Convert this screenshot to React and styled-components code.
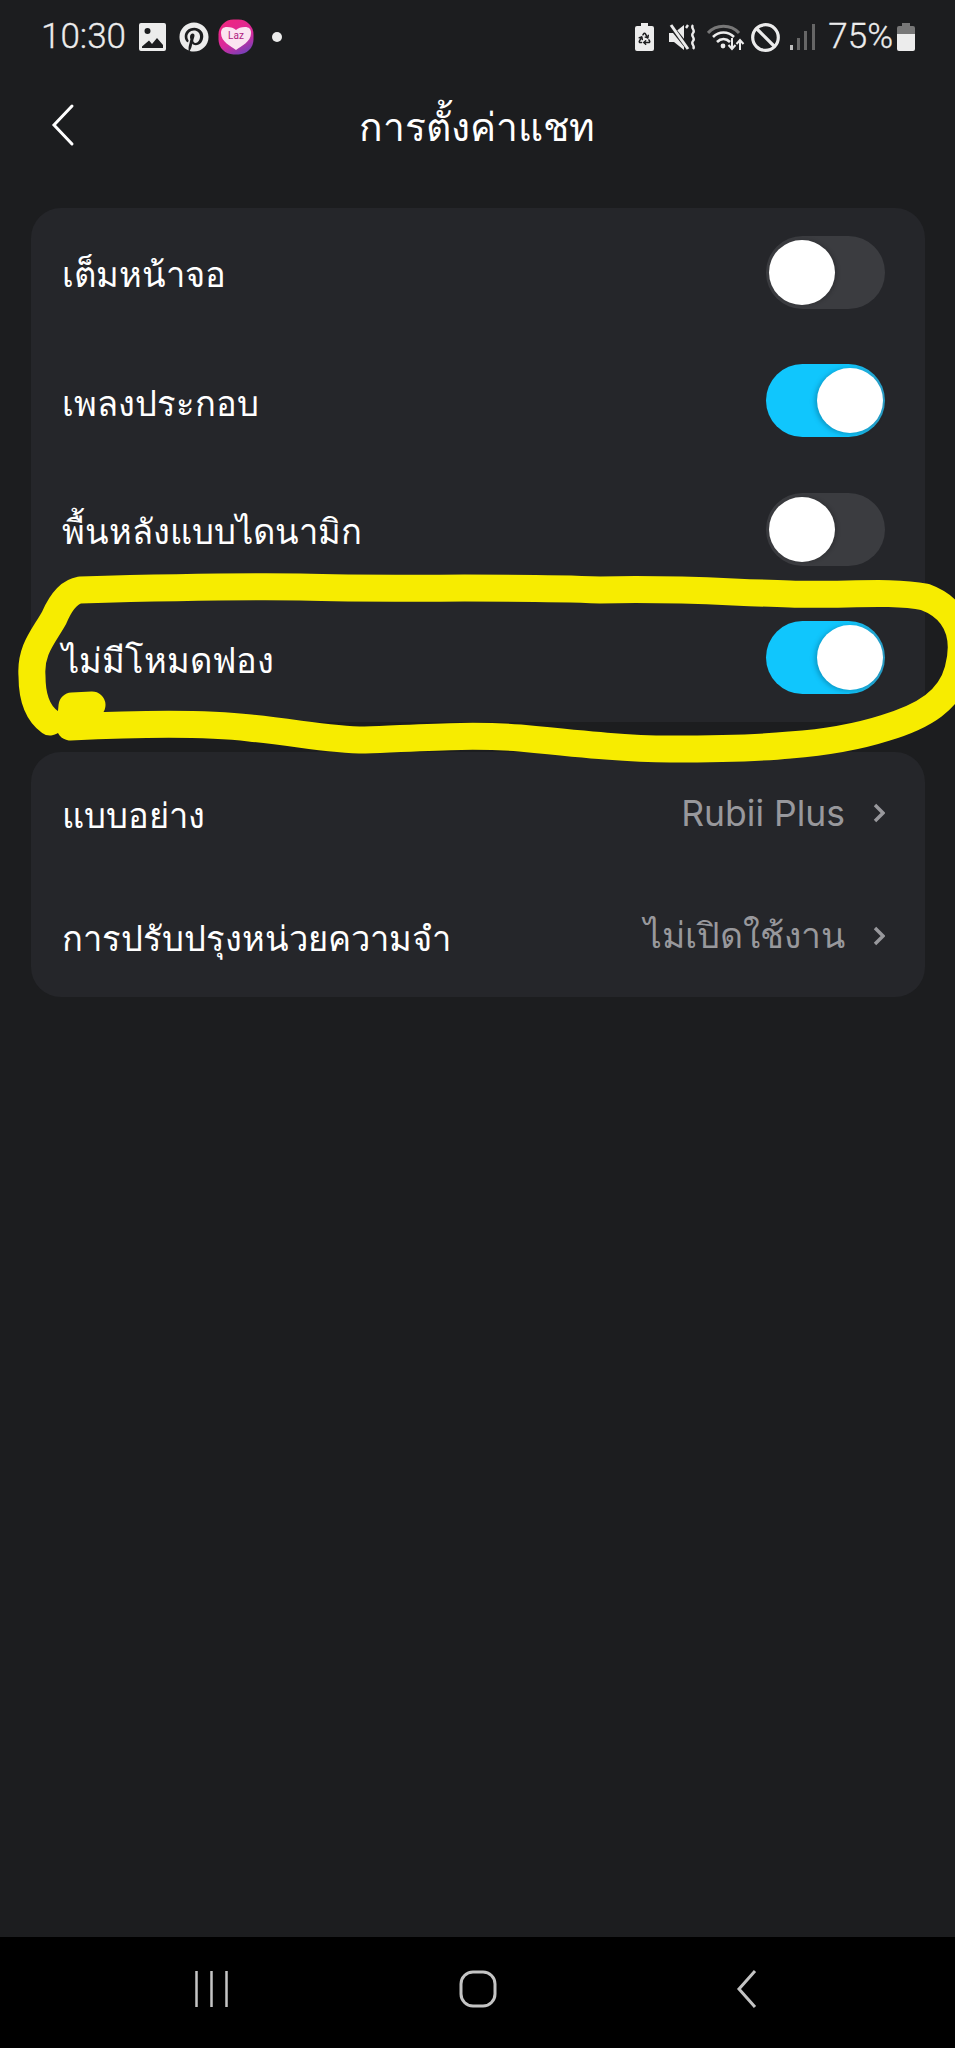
import React from "react";
import styled, { createGlobalStyle } from "styled-components";
import { FaPinterest } from "react-icons/fa";
import { Recycle } from "lucide-react";

const GlobalStyle = createGlobalStyle`
  html, body {
    margin: 0;
    padding: 0;
    background: #1c1d1f;
  }
  * {
    box-sizing: border-box;
  }
`;

const Page = styled.div`
  position: relative;
  width: 955px;
  height: 2048px;
  overflow: hidden;
  display: flex;
  flex-direction: column;
  background: #1c1d1f;
  font-family: "Noto Sans", "Liberation Sans", sans-serif;
  color: #fff;
`;

const StatusBar = styled.div`
  height: 72px;
  padding: 2px 40px 0 41px;
  display: flex;
  align-items: center;
  justify-content: space-between;
  color: #ececec;
`;

const StatusGroup = styled.div`
  display: flex;
  align-items: center;
`;

const StatusSlot = styled.span`
  display: flex;
  align-items: center;
  margin-left: ${(p) => p.$gap || 0}px;
`;

const StatusText = styled.span`
  font-family: Roboto, sans-serif;
  font-size: 35px;
  font-weight: 300;
  line-height: 36px;
  color: #ececec;
  -webkit-text-stroke: 0.3px #ececec;
`;

const Header = styled.header`
  height: 136px;
  padding: 0 0 26px 53px;
  position: relative;
  display: flex;
  align-items: center;
  justify-content: center;
`;

const BackButton = styled.svg`
  position: absolute;
  left: 51px;
  top: 31px;
`;

const Title = styled.h1`
  margin: 0;
  font-size: 39px;
  font-weight: 400;
  position: relative;
  left: -27px;
`;

const Panels = styled.main`
  padding: 0 30px 0 31px;
  display: flex;
  flex-direction: column;
  gap: 30px;
`;

const Panel = styled.section`
  background: #25262a;
  border-radius: 30px;
  display: grid;
  grid-auto-rows: ${(p) => p.$rowHeight}px;
`;

const Row = styled.div`
  padding: 0 40px 0 31px;
  display: flex;
  align-items: center;
  justify-content: space-between;
`;

const Label = styled.span`
  font-size: 34.5px;
  color: #fff;
  line-height: 1.2;
  margin-top: 3px;
`;

const Value = styled.span`
  display: flex;
  align-items: center;
  gap: 28px;
  font-family: Inter, "Noto Sans", sans-serif;
  font-size: 35.5px;
  color: #98989c;
`;

const Track = styled.div`
  width: 119px;
  height: 73px;
  border-radius: 37px;
  padding: 4px 2px 4px 3px;
  display: flex;
  justify-content: ${(p) => (p.$on ? "flex-end" : "flex-start")};
  background: ${(p) =>
    p.$on ? "linear-gradient(90deg, #10c6fd 70%, #2a9cc4 100%)" : "#3b3c40"};
`;

const Knob = styled.div`
  width: 66px;
  height: 65px;
  border-radius: 50%;
  background: #fff;
  box-shadow: ${(p) => (p.$on ? "-2px 1px 5px rgba(0,60,90,0.35)" : "2px 0 4px rgba(0,0,0,0.2)")};
`;

const Spacer = styled.div`
  flex: 1;
`;

const NavBar = styled.nav`
  height: 111px;
  background: #000;
  padding: 0 198px 8px 195px;
  display: flex;
  align-items: center;
  justify-content: space-between;
`;

const Scribble = styled.svg`
  position: absolute;
  left: 0;
  top: 560px;
  pointer-events: none;
`;

const Toggle = ({ on }) => (
  <Track $on={on}>
    <Knob $on={on} />
  </Track>
);

const Chevron = () => (
  <svg width="12" height="20" viewBox="0 0 12 20" fill="none">
    <path d="M2 2l8 8-8 8" stroke="#98989c" strokeWidth="3.4" />
  </svg>
);

const ImageIcon = () => (
  <svg width="27" height="28" viewBox="0 0 27 28">
    <path
      fillRule="evenodd"
      fill="#ececec"
      d="M2 0h23a2 2 0 0 1 2 2v24a2 2 0 0 1-2 2H2a2 2 0 0 1-2-2V2a2 2 0 0 1 2-2zM3 23.5v1.5h21v-3l-6-7-5 6-3-3.5zM8.5 5a3 3 0 1 0 0 6 3 3 0 0 0 0-6z"
    />
  </svg>
);

const LazIcon = () => (
  <svg width="36" height="36" viewBox="0 0 36 36">
    <defs>
      <linearGradient id="laz" x1="0.2" y1="0" x2="0.7" y2="1">
        <stop offset="0" stopColor="#f0277f" />
        <stop offset="0.6" stopColor="#d92a9c" />
        <stop offset="1" stopColor="#7440b8" />
      </linearGradient>
    </defs>
    <rect x="0.5" y="0.5" width="35" height="35" rx="15" fill="url(#laz)" />
    <path
      d="M18 31C13 27 3 23 3 14c0-4 2-6 6-6 4 0 7 1 9 3 2-2 5-3 9-3 4 0 6 2 6 6 0 9-10 13-15 17z"
      fill="#fbe4f1"
    />
    <text x="18" y="20" textAnchor="middle" fontSize="10" fontFamily="Roboto, sans-serif" fill="#b0207f">
      Laz
    </text>
  </svg>
);

const Dot = styled.span`
  width: 10px;
  height: 10px;
  border-radius: 50%;
  background: #ececec;
  margin-left: 18px;
`;

const BatterySaverIcon = () => (
  <svg width="19" height="28" viewBox="0 0 19 28">
    <path d="M6 0h7v3h4a2 2 0 0 1 2 2v21a2 2 0 0 1-2 2H2a2 2 0 0 1-2-2V5a2 2 0 0 1 2-2h4z" fill="#ececec" />
    <Recycle x="2.500" y="8.500" width="14" height="14" color="#1c1d1f" strokeWidth={2.6} />
  </svg>
);

const MuteIcon = () => (
  <svg width="28" height="27" viewBox="0 0 28 27">
    <path d="M0 9h5l10-8v25L5 18H0z" fill="#ececec" />
    <path d="M0 0l20 25" stroke="#1c1d1f" strokeWidth="5" />
    <path d="M2 1l17 24" stroke="#ececec" strokeWidth="3" />
    <path d="M19 1l-2 3M24 1c-3 3 3 5 0 8s3 5 0 8 3 5 0 8" fill="none" stroke="#ececec" strokeWidth="2.400" />
  </svg>
);

const WifiIcon = () => (
  <svg width="38" height="28" viewBox="0 0 38 28" fill="none">
    <path d="M1 10C9 1 24 1 32 10" stroke="#777" strokeWidth="3" />
    <path d="M6 14c6-6 15-6 21 0" stroke="#ececec" strokeWidth="2.600" />
    <path d="M10 19c4-4 9-4 13 0" stroke="#ececec" strokeWidth="2.600" />
    <circle cx="16" cy="23" r="2.400" fill="#ececec" />
    <path d="M25 15v11m-3.500-4l3.500 4 3.500-4" stroke="#ececec" strokeWidth="2" />
    <path d="M33 27V17m-3.500 4l3.500-4 3.500 4" stroke="#ececec" strokeWidth="2" />
  </svg>
);

const BlockedIcon = () => (
  <svg width="29" height="29" viewBox="0 0 29 29" fill="none">
    <circle cx="14.500" cy="14.500" r="12.800" stroke="#ececec" strokeWidth="3.200" />
    <path d="M5.500 5.500l18 18" stroke="#ececec" strokeWidth="3.200" />
  </svg>
);

const SignalIcon = () => (
  <svg width="25" height="26" viewBox="0 0 25 26">
    <rect x="0" y="21" width="3" height="5" fill="#bdbdbd" />
    <rect x="7" y="14" width="3" height="12" fill="#666" />
    <rect x="14" y="7" width="3" height="19" fill="#666" />
    <rect x="22" y="0" width="3" height="26" fill="#666" />
  </svg>
);

const BatteryIcon = () => (
  <svg width="18" height="28" viewBox="0 0 18 28">
    <path d="M5 0h8v3h3a2 2 0 0 1 2 2v6H0V5a2 2 0 0 1 2-2h3z" fill="#777" />
    <path d="M0 11h18v15a2 2 0 0 1-2 2H2a2 2 0 0 1-2-2z" fill="#ececec" />
  </svg>
);

const App = () => (
  <>
    <GlobalStyle />
    <Page>
      <StatusBar>
        <StatusGroup>
          <StatusText>10:30</StatusText>
          <StatusSlot $gap={13}>
            <ImageIcon />
          </StatusSlot>
          <StatusSlot $gap={13}>
            <FaPinterest size={30} color="#ececec" />
          </StatusSlot>
          <StatusSlot $gap={9}>
            <LazIcon />
          </StatusSlot>
          <Dot />
        </StatusGroup>
        <StatusGroup>
          <BatterySaverIcon />
          <StatusSlot $gap={15}>
            <MuteIcon />
          </StatusSlot>
          <StatusSlot $gap={10}>
            <WifiIcon />
          </StatusSlot>
          <StatusSlot $gap={6}>
            <BlockedIcon />
          </StatusSlot>
          <StatusSlot $gap={10}>
            <SignalIcon />
          </StatusSlot>
          <StatusSlot $gap={13}>
            <StatusText>75%</StatusText>
          </StatusSlot>
          <StatusSlot $gap={4}>
            <BatteryIcon />
          </StatusSlot>
        </StatusGroup>
      </StatusBar>

      <Header>
        <BackButton width="24" height="44" viewBox="0 0 24 44" fill="none">
          <path d="M21 3L3 22l18 19" stroke="#fff" strokeWidth="3" strokeLinecap="round" />
        </BackButton>
        <Title>การตั้งค่าแชท</Title>
      </Header>

      <Panels>
        <Panel $rowHeight={128.5}>
          <Row>
            <Label>เต็มหน้าจอ</Label>
            <Toggle />
          </Row>
          <Row>
            <Label>เพลงประกอบ</Label>
            <Toggle on />
          </Row>
          <Row>
            <Label>พื้นหลังแบบไดนามิก</Label>
            <Toggle />
          </Row>
          <Row>
            <Label>ไม่มีโหมดฟอง</Label>
            <Toggle on />
          </Row>
        </Panel>
        <Panel $rowHeight={122.5}>
          <Row>
            <Label>แบบอย่าง</Label>
            <Value>
              Rubii Plus
              <Chevron />
            </Value>
          </Row>
          <Row>
            <Label>การปรับปรุงหน่วยความจำ</Label>
            <Value>
              ไม่เปิดใช้งาน
              <Chevron />
            </Value>
          </Row>
        </Panel>
      </Panels>

      <Spacer />

      <NavBar>
        <svg width="33" height="36" viewBox="0 0 33 36">
          <path d="M1.500 0v36M16.500 0v36M31.500 0v36" stroke="#c4c4c4" strokeWidth="2.500" />
        </svg>
        <svg width="38" height="38" viewBox="0 0 38 38" fill="none">
          <rect x="2" y="2" width="34" height="34" rx="12" stroke="#c4c4c4" strokeWidth="3" />
        </svg>
        <svg width="29" height="38" viewBox="0 0 29 38" fill="none">
          <path d="M27 1L11 19l16 18" stroke="#c4c4c4" strokeWidth="3" />
        </svg>
      </NavBar>

      <Scribble width="955" height="210" viewBox="0 560 955 210" fill="none">
        <path
          d="M92 705L72 706L70 727C130 724 200 722 250 728C300 733 330 740 365 740C420 738 470 734 520 738C590 745 630 749 670 749C720 749 760 748 790 745C830 742 860 736 885 728C925 716 950 700 958 670C966 640 960 610 925 597C890 590 840 596 790 594C720 592 680 588 600 590C500 586 400 590 300 587C220 586 150 588 80 590C68 592 60 604 54 618C44 636 30 650 32 676C32 696 36 712 50 722"
          stroke="#f7ec00"
          strokeWidth="27"
          strokeLinecap="round"
          strokeLinejoin="round"
        />
      </Scribble>
    </Page>
  </>
);

export default App;
